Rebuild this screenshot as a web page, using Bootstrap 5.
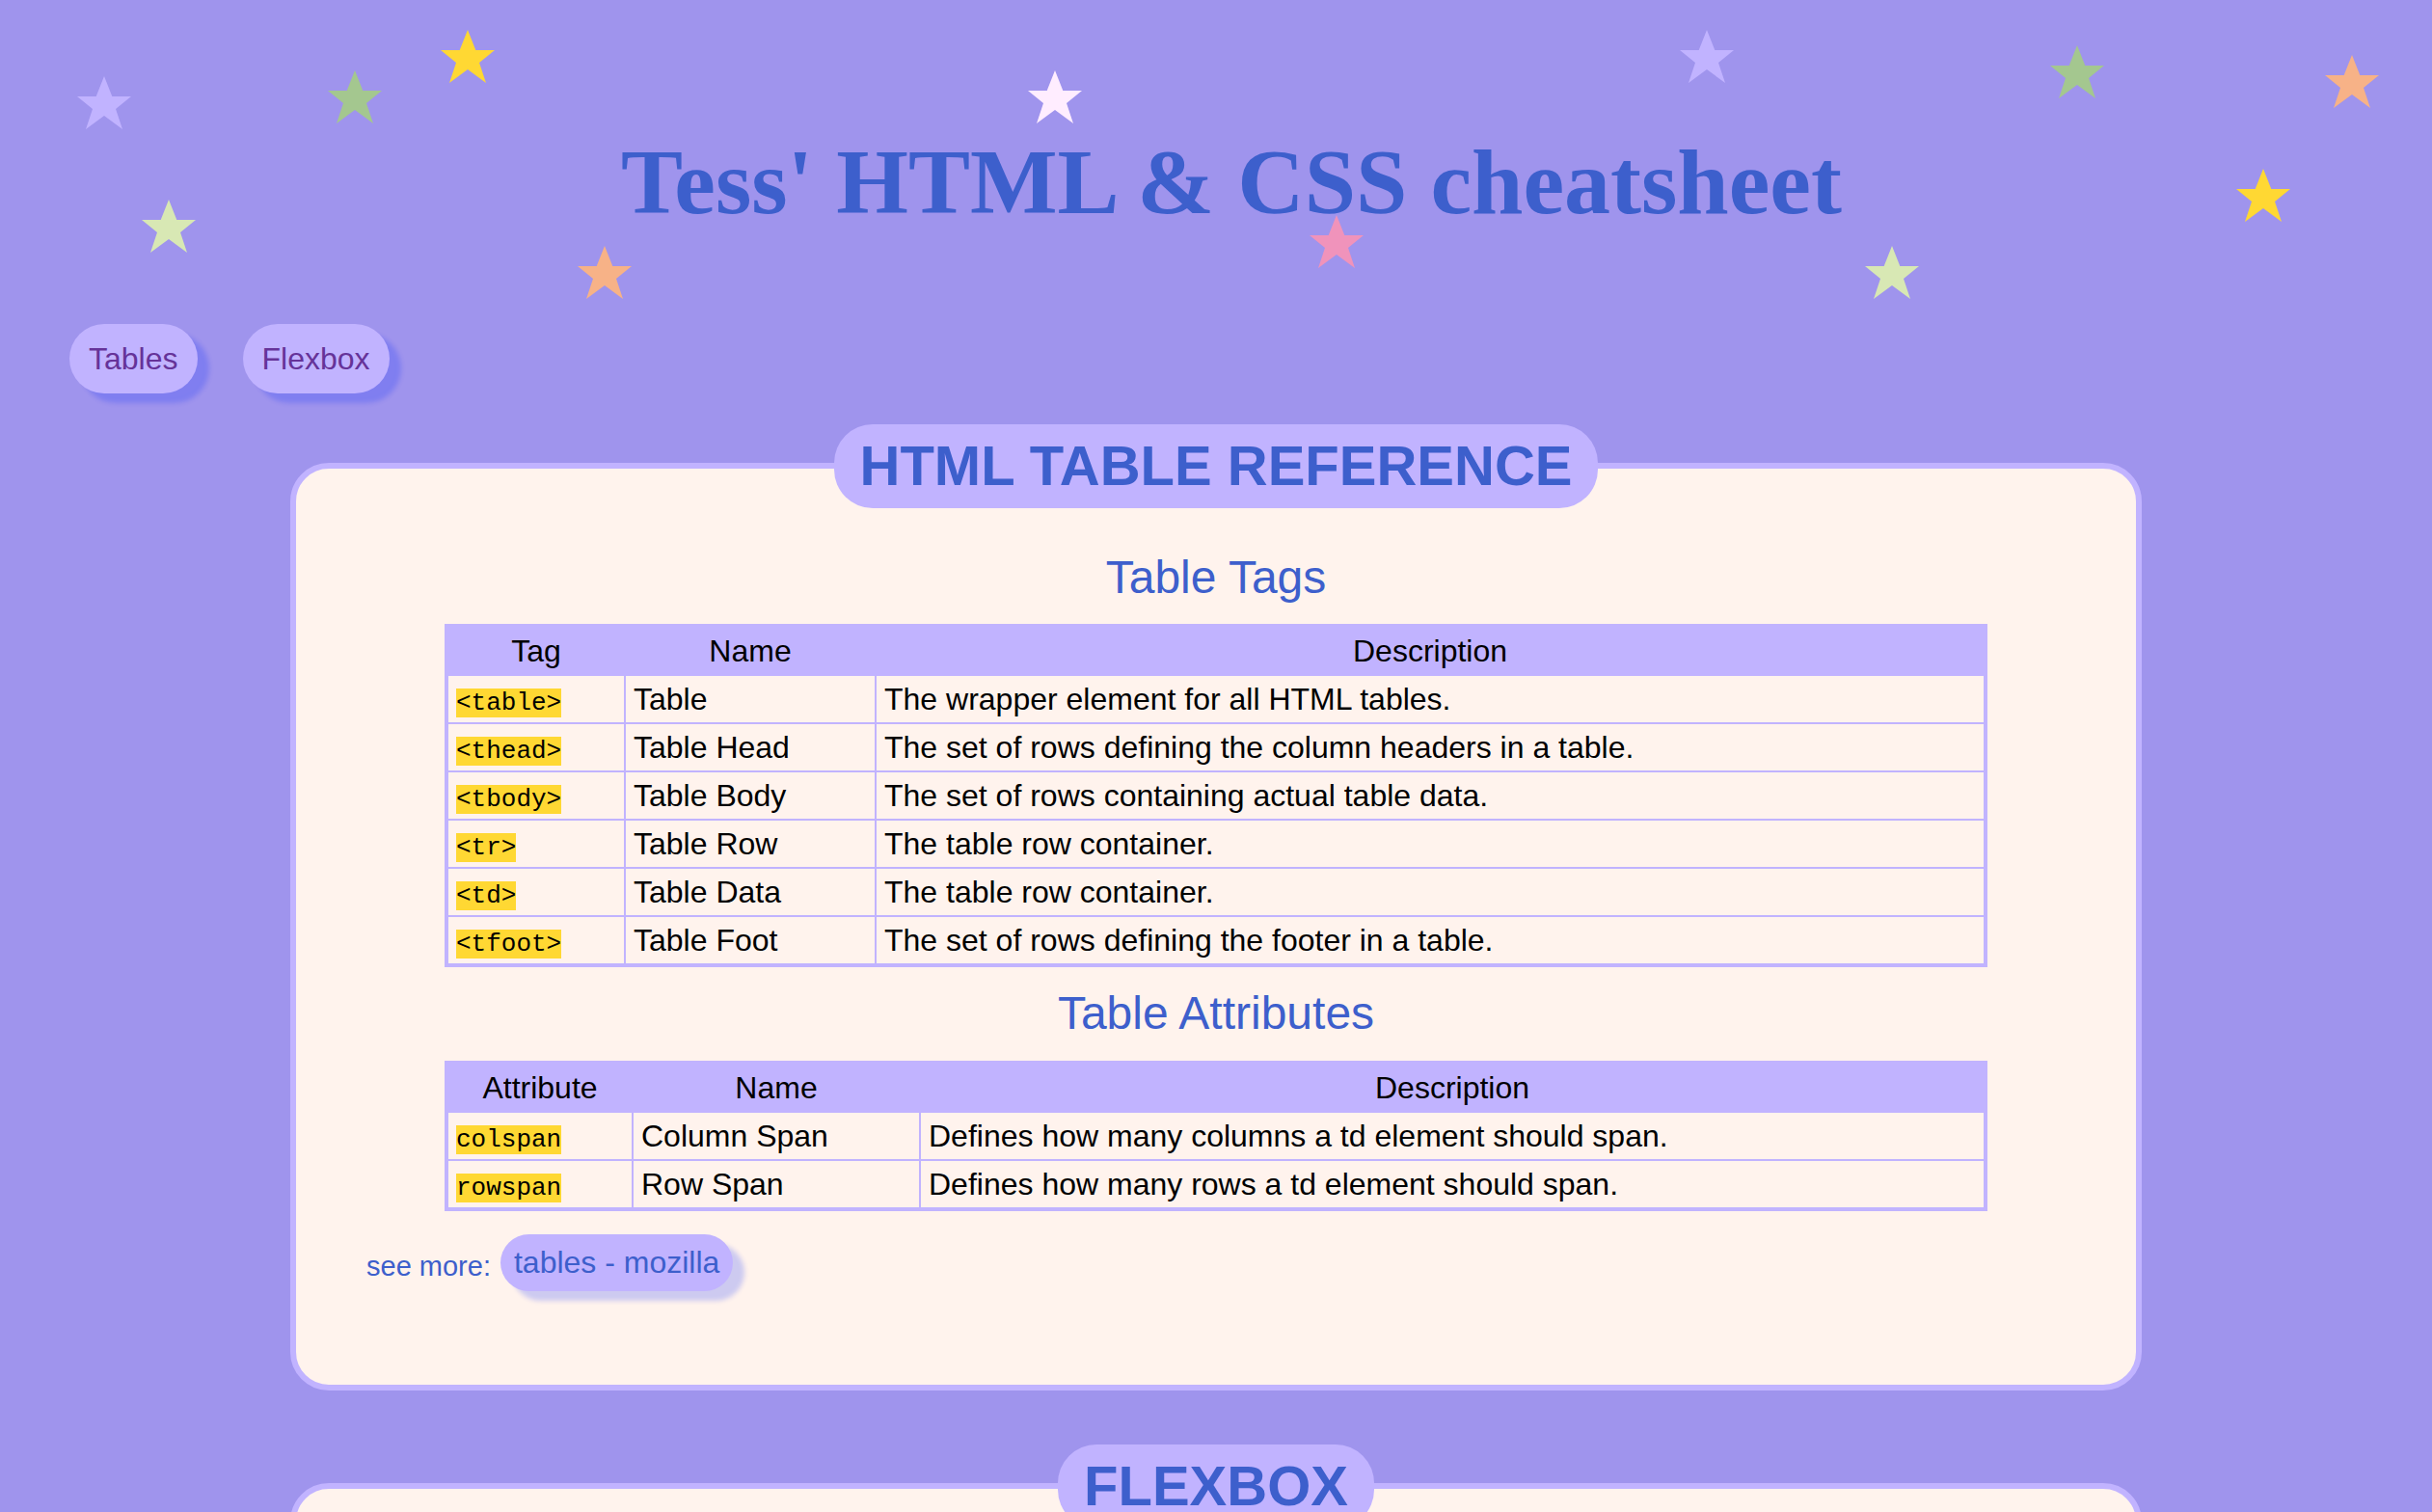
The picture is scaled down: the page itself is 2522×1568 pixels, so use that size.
<!DOCTYPE html>
<html lang="en">
<head>
<meta charset="utf-8">
<meta name="viewport" content="width=device-width, initial-scale=1">
<title>Tess' HTML &amp; CSS cheatsheet</title>
<link href="https://cdn.jsdelivr.net/npm/bootstrap@5.3.0/dist/css/bootstrap.min.css" rel="stylesheet">
<style>
:root {
  --violet: #9f94ed;
  --lilac: #c1b3ff;
  --cream: #fff3ed;
  --ink-blue: #3d5fcc;
  --sun: #ffd833;
}
body {
  background: var(--violet);
  color: #000;
  font-family: "Liberation Sans", Arial, sans-serif;
  font-size: 32px;
  line-height: 36px;
}
.page-head { padding: 133px 0 91px 32px; }
.page-title {
  color: var(--ink-blue);
  font: 700 96px/112px "Liberation Serif", "Times New Roman", serif;
}
.star { position: absolute; width: 56px; height: 55px; }
.star-lilac { fill: var(--lilac); }
.star-green { fill: #a4c78f; }
.star-sun { fill: var(--sun); }
.star-lime { fill: #d8e8b4; }
.star-peach { fill: #f7b287; }
.star-white { fill: #ffedff; }
.star-pink { fill: #f093bb; }
.s1 { left: 80px; top: 79px; }
.s2 { left: 340px; top: 73px; }
.s3 { left: 457px; top: 31px; }
.s4 { left: 147px; top: 207px; }
.s5 { left: 599px; top: 255px; }
.s6 { left: 1066px; top: 73px; }
.s7 { right: 1108px; top: 223px; }
.s8 { right: 724px; top: 31px; }
.s9 { right: 340px; top: 47px; }
.s10 { right: 55px; top: 57px; }
.s11 { right: 147px; top: 175px; }
.s12 { right: 532px; top: 255px; }
.site-nav { gap: 47px; padding: 0 72px; }
.bubble {
  background: var(--lilac);
  box-shadow: 12px 10px 5px rgba(5, 40, 255, .2);
  text-decoration: none;
}
.site-nav .bubble { color: #663399; padding: 18px 20px; border-radius: 36px; }
.more-row .bubble { color: var(--ink-blue); padding: 11px 14px 12px; border-radius: 30px; }
.sheet {
  width: 80%;
  max-width: 1920px;
  margin: 72px auto 96px;
  padding: 0 73px 97px;
  background: var(--cream);
  border: 6px solid var(--lilac);
  border-radius: 40px;
}
.sheet-title {
  margin: -46px 0 23px;
  padding: 11px 27px 12px;
  background: var(--lilac);
  border-radius: 40px;
  color: var(--ink-blue);
  font-size: 58px;
  font-weight: 700;
  line-height: 64px;
}
.sheet-sub {
  margin: 19px 0 21px;
  color: var(--ink-blue);
  font-size: 48px;
  font-weight: 400;
  line-height: 57px;
}
.sheet-title + .sheet-sub { margin-top: 20px; }
.sheet-title + .sheet-sub { margin-bottom: 20px; }
.sheet-table {
  width: 100%;
  max-width: 1600px;
  margin: 0 auto;
  table-layout: fixed;
  border: 4px solid var(--lilac);
}
.sheet-table > :not(caption) > * { border-width: 0; }
.sheet-table > :not(caption) > * > * {
  padding: 6px 8px;
  border: 2px solid var(--lilac);
  background: transparent;
  color: #000;
  box-shadow: none;
}
.sheet-table > thead > tr > th { background: var(--lilac); font-weight: 400; text-align: center; }
.tag-col { width: 185px; }
.tag-name-col { width: 260px; }
.attr-col { width: 193px; }
.attr-name-col { width: 298px; }
.sheet-table code {
  background: var(--sun);
  color: #000;
  font: 26px/1 "Liberation Mono", "Courier New", monospace;
}
.more-row { gap: 10px; margin-top: 24px; color: var(--ink-blue); }
.more-label { font-size: 29px; line-height: 52px; }
</style>
<script src="https://cdn.jsdelivr.net/npm/bootstrap@5.3.0/dist/js/bootstrap.bundle.min.js"></script>
</head>
<body class="vh-100 overflow-hidden">
<svg class="d-none" xmlns="http://www.w3.org/2000/svg">
  <symbol id="star" viewBox="0 0 56 55"><path d="M28 0 36.300 21H56L40 34 47 55 28 41 9 55 16 34 0 21H19.700Z"/></symbol>
</svg>

<header class="page-head position-relative text-center">
  <svg class="star star-lilac s1" aria-hidden="true"><use href="#star"/></svg>
  <svg class="star star-green s2" aria-hidden="true"><use href="#star"/></svg>
  <svg class="star star-sun s3" aria-hidden="true"><use href="#star"/></svg>
  <svg class="star star-lime s4" aria-hidden="true"><use href="#star"/></svg>
  <svg class="star star-peach s5" aria-hidden="true"><use href="#star"/></svg>
  <svg class="star star-white s6" aria-hidden="true"><use href="#star"/></svg>
  <svg class="star star-pink s7" aria-hidden="true"><use href="#star"/></svg>
  <svg class="star star-lilac s8" aria-hidden="true"><use href="#star"/></svg>
  <svg class="star star-green s9" aria-hidden="true"><use href="#star"/></svg>
  <svg class="star star-peach s10" aria-hidden="true"><use href="#star"/></svg>
  <svg class="star star-sun s11" aria-hidden="true"><use href="#star"/></svg>
  <svg class="star star-lime s12" aria-hidden="true"><use href="#star"/></svg>
  <h1 class="page-title m-0">Tess' HTML &amp; CSS cheatsheet</h1>
</header>

<nav class="site-nav d-flex flex-wrap">
  <a class="bubble" href="#tables">Tables</a>
  <a class="bubble" href="#flexbox">Flexbox</a>
</nav>

<main>
  <section class="sheet d-flex flex-column align-items-center" id="tables">
    <h2 class="sheet-title">HTML TABLE REFERENCE</h2>

    <h3 class="sheet-sub">Table Tags</h3>
    <table class="table table-bordered sheet-table">
      <colgroup><col class="tag-col"><col class="tag-name-col"><col></colgroup>
      <thead>
        <tr><th scope="col">Tag</th><th scope="col">Name</th><th scope="col">Description</th></tr>
      </thead>
      <tbody>
        <tr><td><code>&lt;table&gt;</code></td><td>Table</td><td>The wrapper element for all HTML tables.</td></tr>
        <tr><td><code>&lt;thead&gt;</code></td><td>Table Head</td><td>The set of rows defining the column headers in a table.</td></tr>
        <tr><td><code>&lt;tbody&gt;</code></td><td>Table Body</td><td>The set of rows containing actual table data.</td></tr>
        <tr><td><code>&lt;tr&gt;</code></td><td>Table Row</td><td>The table row container.</td></tr>
        <tr><td><code>&lt;td&gt;</code></td><td>Table Data</td><td>The table row container.</td></tr>
        <tr><td><code>&lt;tfoot&gt;</code></td><td>Table Foot</td><td>The set of rows defining the footer in a table.</td></tr>
      </tbody>
    </table>

    <h3 class="sheet-sub">Table Attributes</h3>
    <table class="table table-bordered sheet-table">
      <colgroup><col class="attr-col"><col class="attr-name-col"><col></colgroup>
      <thead>
        <tr><th scope="col">Attribute</th><th scope="col">Name</th><th scope="col">Description</th></tr>
      </thead>
      <tbody>
        <tr><td><code>colspan</code></td><td>Column Span</td><td>Defines how many columns a td element should span.</td></tr>
        <tr><td><code>rowspan</code></td><td>Row Span</td><td>Defines how many rows a td element should span.</td></tr>
      </tbody>
    </table>

    <div class="more-row d-flex align-items-end align-self-start">
      <span class="more-label">see more:</span>
      <a class="bubble" href="https://developer.mozilla.org/en-US/docs/Web/HTML/Element/table">tables - mozilla</a>
    </div>
  </section>

  <section class="sheet d-flex flex-column align-items-center" id="flexbox">
    <h2 class="sheet-title">FLEXBOX</h2>
  </section>
</main>
</body>
</html>
